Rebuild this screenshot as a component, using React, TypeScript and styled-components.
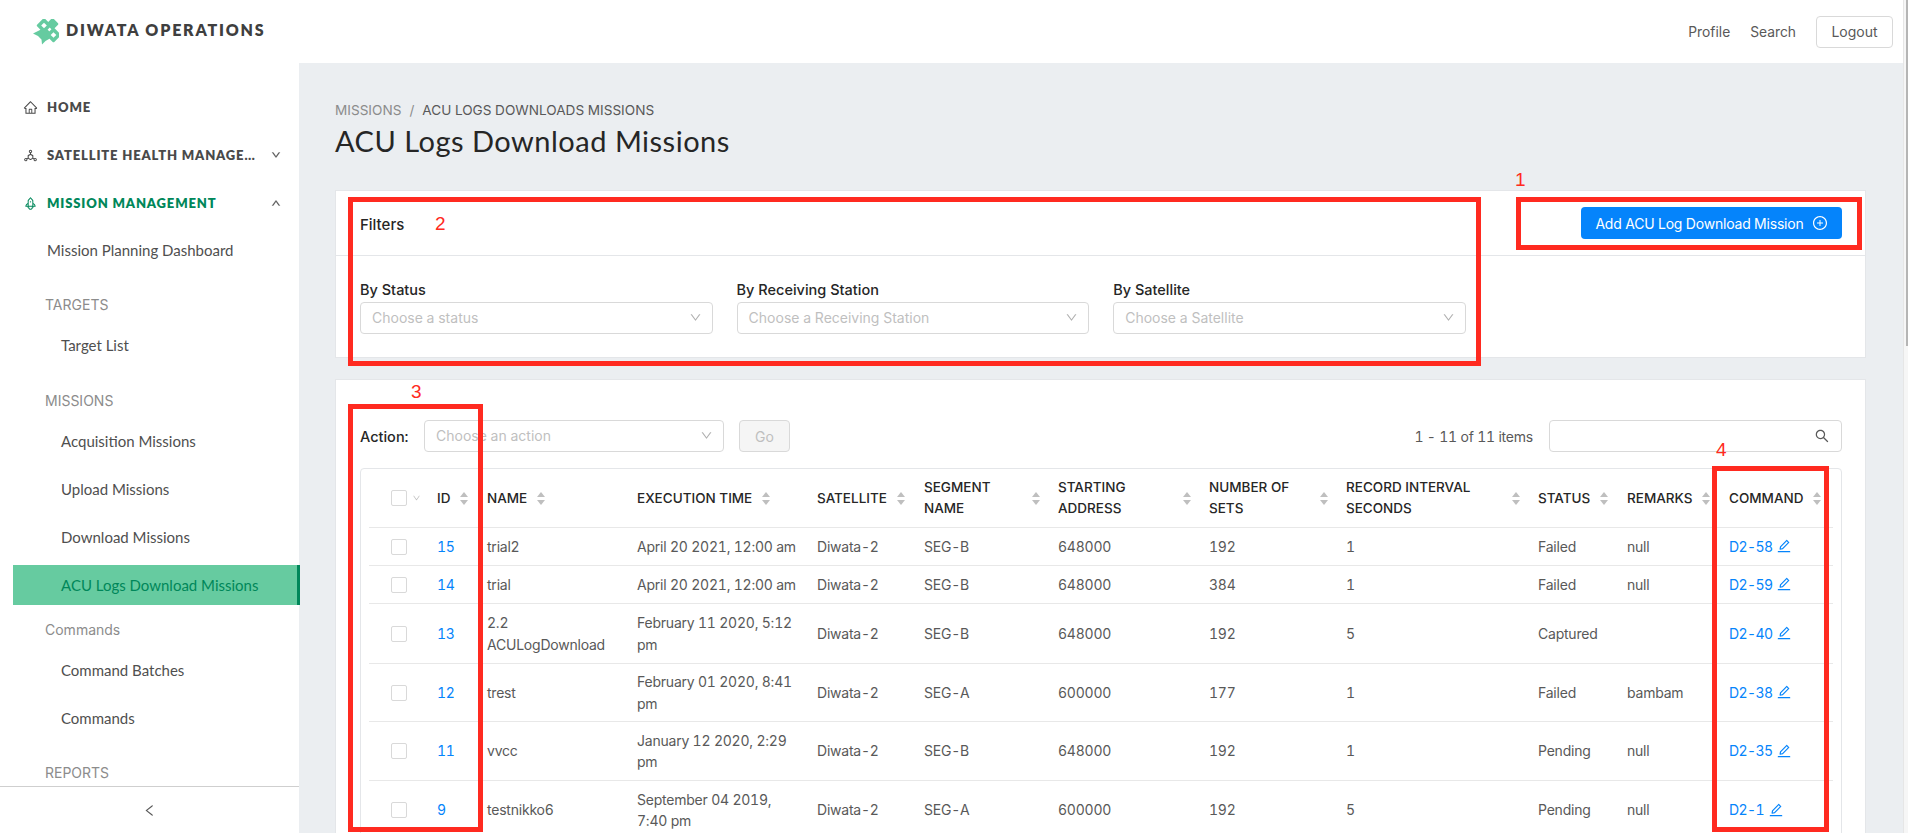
import React from 'react';
import styled, { createGlobalStyle } from 'styled-components';
import {
  AiOutlineHome,
  AiOutlineDeploymentUnit,
  AiOutlineRocket,
  AiOutlineDown,
  AiOutlineUp,
  AiOutlineLeft,
  AiOutlineSearch,
  AiOutlinePlusCircle,
  AiOutlineEdit,
} from 'react-icons/ai';

const GlobalStyle = createGlobalStyle`
  * { box-sizing: border-box; }
  html, body { margin: 0; padding: 0; height: 100%; overflow: hidden; background: #fff; }
  body {
    font-family: Inter, "Liberation Sans", sans-serif;
    font-size: 14px;
    font-feature-settings: "tnum";
    color: #595959;
  }
`;

const navFont = `Lato, "Open Sans", sans-serif`;

const rows = [
  { h: 38, id: '15', name: 'trial2', time: 'April 20 2021, 12:00 am', seg: 'SEG-B', addr: '648000', sets: '192', interval: '1', status: 'Failed', remarks: 'null', cmd: 'D2-58' },
  { h: 38, id: '14', name: 'trial', time: 'April 20 2021, 12:00 am', seg: 'SEG-B', addr: '648000', sets: '384', interval: '1', status: 'Failed', remarks: 'null', cmd: 'D2-59' },
  { h: 60, id: '13', name: '2.2 ACULogDownload', time: 'February 11 2020, 5:12 pm', seg: 'SEG-B', addr: '648000', sets: '192', interval: '5', status: 'Captured', remarks: '', cmd: 'D2-40' },
  { h: 58, id: '12', name: 'trest', time: 'February 01 2020, 8:41 pm', seg: 'SEG-A', addr: '600000', sets: '177', interval: '1', status: 'Failed', remarks: 'bambam', cmd: 'D2-38' },
  { h: 59, id: '11', name: 'vvcc', time: 'January 12 2020, 2:29 pm', seg: 'SEG-B', addr: '648000', sets: '192', interval: '1', status: 'Pending', remarks: 'null', cmd: 'D2-35' },
  { h: 59, id: '9', name: 'testnikko6', time: 'September 04 2019, 7:40 pm', seg: 'SEG-A', addr: '600000', sets: '192', interval: '5', status: 'Pending', remarks: 'null', cmd: 'D2-1' },
];

const columns: { w: number; label: React.ReactNode; spread?: boolean }[] = [
  { w: 50, label: 'ID' },
  { w: 150, label: 'NAME' },
  { w: 180, label: 'EXECUTION TIME' },
  { w: 107, label: 'SATELLITE' },
  { w: 134, label: <>SEGMENT<br />NAME</>, spread: true },
  { w: 151, label: <>STARTING<br />ADDRESS</>, spread: true },
  { w: 137, label: <>NUMBER OF<br />SETS</>, spread: true },
  { w: 192, label: <>RECORD INTERVAL<br />SECONDS</>, spread: true },
  { w: 89, label: 'STATUS' },
  { w: 102, label: 'REMARKS' },
  { w: 120, label: 'COMMAND' },
];

const marks = [
  { x: 1516, y: 197, w: 346, h: 53 },
  { x: 348, y: 197, w: 1133, h: 169 },
  { x: 348, y: 404, w: 135, h: 428 },
  { x: 1712, y: 466, w: 117, h: 366 },
];

const markLabels = [
  { x: 1515, y: 169, text: '1' },
  { x: 435, y: 213, text: '2' },
  { x: 411, y: 381, text: '3' },
  { x: 1716, y: 439, text: '4' },
];

function Sorter() {
  return (
    <SorterIcon viewBox="0 0 8 13">
      <path d="M4 0 L8 5 H0 Z" />
      <path d="M0 8 H8 L4 13 Z" />
    </SorterIcon>
  );
}

function Logo() {
  return (
    <svg width="26" height="26" viewBox="0 0 26 26">
      <path fill="#66cba0" d="M0 14.5 L7 11 L11 7 L20 16 L16 20 L12.500 22 L9 25.500 L8.500 20.500 L5 17 Z" />
      <rect x="5.500" y="1" width="11" height="11" rx="1.500" fill="#66cba0" transform="rotate(45 11 6.500)" />
      <rect x="15" y="10.500" width="11" height="11" rx="1.500" fill="#66cba0" transform="rotate(45 20.500 16)" />
      <rect x="15" y="0.500" width="9" height="9" rx="1.500" fill="#66cba0" transform="rotate(45 19.500 5)" />
      <rect x="9" y="4.500" width="4" height="4" fill="#fff" transform="rotate(45 11 6.500)" />
      <rect x="18.500" y="14" width="4" height="4" fill="#fff" transform="rotate(45 20.500 16)" />
    </svg>
  );
}

export default function App() {
  return (
    <Page>
      <GlobalStyle />
      <Frame>
        <Header>
          <Brand>
            <Logo />
            <BrandName>DIWATA OPERATIONS</BrandName>
          </Brand>
          <HeaderLinks>
            <HeaderLink>Profile</HeaderLink>
            <HeaderLink>Search</HeaderLink>
            <LogoutButton>Logout</LogoutButton>
          </HeaderLinks>
        </Header>
        <Body>
          <Sidebar>
            <Nav>
              <TopItem>
                <AiOutlineHome size={15} />
                <TopLabel>Home</TopLabel>
              </TopItem>
              <TopItem>
                <AiOutlineDeploymentUnit size={15} />
                <TopLabel>Satellite Health Management</TopLabel>
                <TopChevron><AiOutlineDown size={10} /></TopChevron>
              </TopItem>
              <TopItem $active>
                <AiOutlineRocket size={15} />
                <TopLabel>Mission Management</TopLabel>
                <TopChevron><AiOutlineUp size={10} /></TopChevron>
              </TopItem>
              <SubItem $level={1}>Mission Planning Dashboard</SubItem>
              <GroupTitle>TARGETS</GroupTitle>
              <SubItem>Target List</SubItem>
              <GroupTitle $top={15}>MISSIONS</GroupTitle>
              <SubItem>Acquisition Missions</SubItem>
              <SubItem>Upload Missions</SubItem>
              <SubItem>Download Missions</SubItem>
              <ActiveItem>ACU Logs Download Missions</ActiveItem>
              <GroupTitle $top={4}>Commands</GroupTitle>
              <SubItem>Command Batches</SubItem>
              <SubItem>Commands</SubItem>
              <GroupTitle $top={14}>REPORTS</GroupTitle>
            </Nav>
            <Collapse>
              <AiOutlineLeft size={15} />
            </Collapse>
          </Sidebar>
          <Content>
            <Breadcrumb>
              <Crumb>MISSIONS</Crumb>
              <CrumbSep>/</CrumbSep>
              <CrumbCurrent>ACU LOGS DOWNLOADS MISSIONS</CrumbCurrent>
            </Breadcrumb>
            <Title>ACU Logs Download Missions</Title>
            <FilterCard>
              <FilterHead>
                <FilterTitle>Filters</FilterTitle>
                <PrimaryButton>
                  Add ACU Log Download Mission
                  <AiOutlinePlusCircle size={16} />
                </PrimaryButton>
              </FilterHead>
              <FilterBody>
                <FilterField>
                  <FieldLabel>By Status</FieldLabel>
                  <Select>Choose a status<AiOutlineDown size={13} /></Select>
                </FilterField>
                <FilterField>
                  <FieldLabel>By Receiving Station</FieldLabel>
                  <Select>Choose a Receiving Station<AiOutlineDown size={13} /></Select>
                </FilterField>
                <FilterField>
                  <FieldLabel>By Satellite</FieldLabel>
                  <Select>Choose a Satellite<AiOutlineDown size={13} /></Select>
                </FilterField>
              </FilterBody>
            </FilterCard>
            <TableCard>
              <ActionBar>
                <ActionLabel>Action:</ActionLabel>
                <ActionSelect>Choose an action<AiOutlineDown size={13} /></ActionSelect>
                <GoButton>Go</GoButton>
                <ItemCount>1 - 11 of 11 items</ItemCount>
                <SearchBox><AiOutlineSearch size={16} /></SearchBox>
              </ActionBar>
              <TableWrap>
                <Table>
                  <colgroup>
                    <Col $w={52} />
                    {columns.map((c, i) => <Col key={i} $w={c.w} />)}
                  </colgroup>
                  <thead>
                    <tr>
                      <HeadCheckCell>
                        <HeadCheck>
                          <Checkbox />
                          <AiOutlineDown size={10} />
                        </HeadCheck>
                      </HeadCheckCell>
                      {columns.map((c, i) => (
                        <HeadCell key={i}>
                          <HeadInner $spread={c.spread}>
                            <span>{c.label}</span>
                            <Sorter />
                          </HeadInner>
                        </HeadCell>
                      ))}
                    </tr>
                  </thead>
                  <tbody>
                    {rows.map((r) => (
                      <Row key={r.id} $h={r.h}>
                        <CheckCell><Checkbox /></CheckCell>
                        <Cell><IdLink>{r.id}</IdLink></Cell>
                        <Cell>{r.name}</Cell>
                        <Cell>{r.time}</Cell>
                        <Cell>Diwata-2</Cell>
                        <Cell>{r.seg}</Cell>
                        <Cell>{r.addr}</Cell>
                        <Cell>{r.sets}</Cell>
                        <Cell>{r.interval}</Cell>
                        <Cell>{r.status}</Cell>
                        <Cell>{r.remarks}</Cell>
                        <Cell>
                          <CommandLink>{r.cmd}<AiOutlineEdit size={16} /></CommandLink>
                        </Cell>
                      </Row>
                    ))}
                  </tbody>
                </Table>
              </TableWrap>
            </TableCard>
          </Content>
        </Body>
      </Frame>
      <Scrollbar>
        <ScrollThumb />
      </Scrollbar>
      {marks.map((m, i) => <Mark key={i} $x={m.x} $y={m.y} $w={m.w} $h={m.h} />)}
      {markLabels.map((m) => <MarkLabel key={m.text} $x={m.x} $y={m.y}>{m.text}</MarkLabel>)}
    </Page>
  );
}

const Page = styled.div`
  position: relative;
  display: flex;
  width: 100%;
  height: 100vh;
  overflow: hidden;
`;

const Frame = styled.div`
  flex: 1;
  min-width: 0;
  display: flex;
  flex-direction: column;
`;

const Scrollbar = styled.div`
  width: 5px;
  background: #f6f6f6;
  border-left: 1px solid #e6e6e6;
`;

const ScrollThumb = styled.div`
  width: 2px;
  height: 346px;
  margin-left: 2px;
  background: #b5b5b5;
`;

const Header = styled.header`
  height: 63px;
  flex-shrink: 0;
  display: flex;
  align-items: center;
  justify-content: space-between;
  padding: 0 10px 0 33px;
  background: #fff;
`;

const Brand = styled.div`
  display: flex;
  align-items: center;
  gap: 7px;
`;

const BrandName = styled.span`
  margin-top: -5px;
  font-family: ${navFont};
  font-size: 16px;
  font-weight: 800;
  letter-spacing: 1.8px;
  color: #3f3f3f;
`;

const HeaderLinks = styled.nav`
  display: flex;
  align-items: center;
  gap: 20px;
`;

const HeaderLink = styled.a`
  color: #595959;
  font-size: 13.8px;
`;

const LogoutButton = styled.button`
  width: 77px;
  height: 32px;
  padding: 0;
  background: #fff;
  border: 1px solid #d9d9d9;
  border-radius: 4px;
  color: #595959;
  font: inherit;
`;

const Body = styled.div`
  flex: 1;
  min-height: 0;
  display: flex;
`;

const Sidebar = styled.aside`
  width: 299px;
  flex-shrink: 0;
  display: flex;
  flex-direction: column;
  background: #fff;
  font-family: ${navFont};
`;

const Nav = styled.div`
  flex: 1;
  min-height: 0;
  padding-top: 24px;
`;

const TopItem = styled.div<{ $active?: boolean }>`
  height: 40px;
  margin-bottom: 8px;
  display: flex;
  align-items: center;
  gap: 9px;
  padding: 0 18px 0 23px;
  color: ${(p) => (p.$active ? '#00875a' : '#4a4a4a')};
  svg { flex-shrink: 0; }
`;

const TopLabel = styled.span`
  flex: 1;
  min-width: 0;
  white-space: nowrap;
  overflow: hidden;
  text-overflow: ellipsis;
  font-size: 13px;
  font-weight: 800;
  letter-spacing: 0.85px;
  text-transform: uppercase;
`;

const TopChevron = styled.span`
  display: flex;
  margin-left: 3px;
  color: #4a4a4a;
  svg { stroke: currentColor; stroke-width: 45; }
`;

const SubItem = styled.div<{ $level?: number }>`
  height: 40px;
  margin-top: ${(p) => (p.$level === 1 ? -1 : 0)}px;
  margin-bottom: 8px;
  display: flex;
  align-items: center;
  padding-left: ${(p) => (p.$level === 1 ? 47 : 61)}px;
  font-size: 15px;
  color: #4f4f4f;
`;

const ActiveItem = styled.div`
  position: relative;
  height: 40px;
  margin: 0 -1px 0 13px;
  display: flex;
  align-items: center;
  padding-left: 48px;
  background: #66cba0;
  border-right: 3px solid #00875a;
  font-size: 15px;
  color: #00875a;
`;

const GroupTitle = styled.div<{ $top?: number }>`
  height: 40px;
  margin-top: ${(p) => p.$top ?? 14}px;
  margin-bottom: 1px;
  display: flex;
  align-items: center;
  padding-left: 45px;
  font-family: Inter, sans-serif;
  font-size: 14px;
  color: #8c8c8c;
`;

const Collapse = styled.div`
  position: relative;
  height: 47px;
  flex-shrink: 0;
  display: flex;
  align-items: center;
  justify-content: center;
  background: #fff;
  border-top: 1px solid #cfcfcf;
  color: #595959;
`;

const Content = styled.main`
  flex: 1;
  min-width: 0;
  padding: 38px 37px 0 36px;
  background: #ebeef1;
  overflow: hidden;
`;

const Breadcrumb = styled.div`
  display: flex;
  gap: 8px;
  height: 18px;
  align-items: center;
  font-size: 13.6px;
`;

const Crumb = styled.span`
  color: #8c8c8c;
`;

const CrumbSep = styled.span`
  color: #8c8c8c;
`;

const CrumbCurrent = styled.span`
  color: #595959;
`;

const Title = styled.h1`
  margin: 2px 0 0;
  height: 40px;
  line-height: 40px;
  font-family: ${navFont};
  font-size: 29px;
  font-weight: 400;
  letter-spacing: 0.5px;
  color: #262626;
`;

const CardBase = styled.section`
  background: #fff;
  border: 1px solid #e4e6e9;
`;

const FilterCard = styled(CardBase)`
  margin-top: 29px;
  height: 168px;
`;

const FilterHead = styled.div`
  height: 65px;
  display: flex;
  align-items: center;
  justify-content: space-between;
  padding: 0 23px 0 24px;
  border-bottom: 1px solid #e4e6e9;
`;

const FilterTitle = styled.span`
  margin-top: 2px;
  font-size: 15px;
  font-weight: 500;
  color: #262626;
`;

const PrimaryButton = styled.button`
  width: 261px;
  height: 32px;
  display: flex;
  align-items: center;
  justify-content: center;
  gap: 8px;
  padding: 0;
  background: #0584fb;
  border: 0;
  border-radius: 4px;
  color: #fff;
  font: inherit;
  letter-spacing: -0.2px;
`;

const FilterBody = styled.div`
  display: grid;
  grid-template-columns: repeat(3, 352.6px);
  gap: 24px;
  padding: 23px 24px 0;
`;

const FilterField = styled.label`
  display: flex;
  flex-direction: column;
`;

const FieldLabel = styled.span`
  height: 23px;
  line-height: 22px;
  font-size: 14.5px;
  font-weight: 500;
  color: #262626;
`;

const Select = styled.div`
  height: 32px;
  display: flex;
  align-items: center;
  justify-content: space-between;
  padding: 0 10px 2px 11px;
  background: #fff;
  border: 1px solid #d9d9d9;
  border-radius: 4px;
  color: #bfbfbf;
  svg { color: #b0b0b0; }
`;

const TableCard = styled(CardBase)`
  margin-top: 21px;
  padding: 40px 23px 0 24px;
`;

const ActionBar = styled.div`
  display: flex;
  align-items: center;
  height: 32px;
`;

const ActionLabel = styled.span`
  width: 64px;
  font-size: 14.5px;
  font-weight: 500;
  color: #262626;
`;

const ActionSelect = styled(Select)`
  width: 300px;
`;

const GoButton = styled.button`
  width: 51px;
  height: 32px;
  margin-left: 15px;
  padding: 0;
  background: #f5f5f5;
  border: 1px solid #d9d9d9;
  border-radius: 4px;
  color: #bfbfbf;
  font: inherit;
`;

const ItemCount = styled.span`
  margin-left: auto;
  margin-right: 16px;
  letter-spacing: -0.22px;
  color: #595959;
`;

const SearchBox = styled.div`
  width: 293px;
  height: 32px;
  display: flex;
  align-items: center;
  justify-content: flex-end;
  padding-right: 11px;
  border: 1px solid #d9d9d9;
  border-radius: 4px;
  color: #595959;
`;

const TableWrap = styled.div`
  margin-top: 16px;
  padding: 0 8px;
  border: 1px solid #e4e6e9;
  border-radius: 4px;
`;

const Table = styled.table`
  width: 100%;
  table-layout: fixed;
  border-collapse: separate;
  border-spacing: 0;
`;

const Col = styled.col<{ $w: number }>`
  width: ${(p) => p.$w}px;
`;

const HeadCell = styled.th`
  height: 59px;
  padding: 0 2px 0 16px;
  border-bottom: 1px solid #e8e8e8;
  text-align: left;
  font-size: 13.5px;
  font-weight: 500;
  line-height: 21px;
  color: #262626;
`;

const HeadCheckCell = styled(HeadCell)`
  padding: 0 0 0 22px;
`;

const HeadCheck = styled.div`
  display: flex;
  align-items: center;
  gap: 5px;
  color: #bfbfbf;
`;

const HeadInner = styled.div<{ $spread?: boolean }>`
  display: flex;
  align-items: center;
  gap: 10px;
  justify-content: ${(p) => (p.$spread ? 'space-between' : 'flex-start')};
`;

const SorterIcon = styled.svg`
  width: 8px;
  height: 13px;
  flex-shrink: 0;
  fill: #bfbfbf;
`;

const Checkbox = styled.span`
  display: block;
  width: 16px;
  height: 16px;
  flex-shrink: 0;
  background: #fff;
  border: 1px solid #d9d9d9;
  border-radius: 2px;
`;

const Row = styled.tr<{ $h: number }>`
  height: ${(p) => p.$h}px;
`;

const Cell = styled.td`
  padding: 0 0 0 16px;
  border-bottom: 1px solid #e8e8e8;
  line-height: 21.3px;
  letter-spacing: -0.22px;
  color: #595959;
`;

const CheckCell = styled(Cell)`
  padding: 0 0 0 22px;
`;

const IdLink = styled.a`
  color: #0584fb;
`;

const CommandLink = styled.a`
  display: inline-flex;
  align-items: center;
  gap: 4px;
  letter-spacing: -0.6px;
  color: #0584fb;
`;

const Mark = styled.div<{ $x: number; $y: number; $w: number; $h: number }>`
  position: absolute;
  left: ${(p) => p.$x}px;
  top: ${(p) => p.$y}px;
  width: ${(p) => p.$w}px;
  height: ${(p) => p.$h}px;
  border: 5px solid #ff2a20;
  pointer-events: none;
`;

const MarkLabel = styled.span<{ $x: number; $y: number }>`
  position: absolute;
  left: ${(p) => p.$x}px;
  top: ${(p) => p.$y}px;
  font-family: "Liberation Sans", sans-serif;
  font-size: 19px;
  line-height: 22px;
  color: #ff2a20;
`;
